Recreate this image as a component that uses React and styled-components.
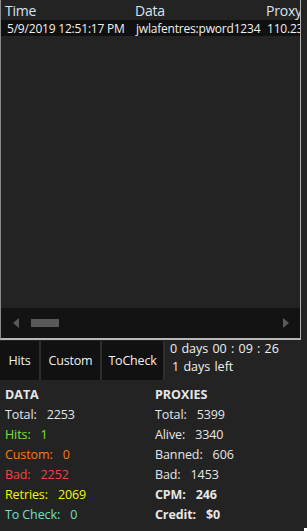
import React from 'react'
import styled, { createGlobalStyle } from 'styled-components';

const Global = createGlobalStyle`
  *, *::before, *::after { box-sizing: border-box; }
  html, body {
    margin: 0;
    padding: 0;
    background: #232323;
  }
  body {
    font-family: "Open Sans", "Noto Sans", sans-serif;
    color: #e6e6e6;
  }
`;

const Page = styled.div`
  width: 307px;
  height: 531px;
  background: #232323;
  display: flex;
  flex-direction: column;
  overflow: hidden;
  position: relative;
`;

// 결과 그리드
const Grid = styled.div`
  width: 301px;
  height: 340px;
  border-left: 1px solid #8a8a8a;
  border-right: 1px solid #b0b0b0;
  border-bottom: 2px solid #b8b8b8;
  display: flex;
  flex-direction: column;
  overflow: hidden;
  background: #232323;
`;

const Row = styled.div`
  display: grid;
  grid-template-columns: 130px 131px 80px;
  height: ${p => p.$h}px;
  flex-shrink: 0;
  align-items: center;
  background: ${p => p.$bg};
  white-space: nowrap;
`;

const HeadCell = styled.div`
  font-size: 14px;
  color: #d8e4f0;
  padding-left: 4px;
  letter-spacing: -0.2px;
`;

const Cell = styled.div`
  font-size: 12px;
  color: #f0f0f0;
  padding-left: ${p => p.$pl || 5}px;
  letter-spacing: -0.2px;
`;

const Body = styled.div`
  flex: 1;
`;

const HScroll = styled.div`
  height: 30px;
  flex-shrink: 0;
  background: #131313;
  display: flex;
  align-items: center;
  padding: 0 11px 0 12px;
  gap: 12px;
`;

const Arrow = styled.div`
  width: 0;
  height: 0;
  border-top: 5px solid transparent;
  border-bottom: 5px solid transparent;
  ${p => p.$dir === 'left'
    ? 'border-right: 6px solid #5a5a5a;'
    : 'border-left: 6px solid #5a5a5a; margin-left: auto;'}
`;

const Thumb = styled.div`
  width: 28px;
  height: 8px;
  background: #5a5a5a;
`;

const Controls = styled.div`
  display: flex;
  height: 39px;
  margin-top: 1px;
  flex-shrink: 0;
`;

const Tab = styled.div`
  width: ${p => p.$w}px;
  height: 100%;
  background: #111;
  border-right: 2px solid #2e2e2e;
  display: flex;
  align-items: center;
  justify-content: center;
  font-size: 12.5px;
  color: #f0f0f0;
  letter-spacing: -0.2px;
`;

const Timer = styled.div`
  display: flex;
  flex-direction: column;
  padding: 0 0 0 5px;
  font-size: 12.5px;
  line-height: 18px;
  color: #f0f0f0;
  word-spacing: 1px;
  margin-top: -1px;
`;

const Stats = styled.div`
  display: grid;
  grid-template-columns: 150px 1fr;
  padding: 5px 0 0 5px;
`;

const Col = styled.div`
  display: flex;
  flex-direction: column;
`;

const Title = styled.div`
  font-size: 12.5px;
  font-weight: 700;
  color: #e6e6e6;
  height: 20px;
  line-height: 20px;
`;

const Stat = styled.div`
  font-size: 12.5px;
  height: 20px;
  line-height: 20px;
  color: ${p => p.$color || '#e6e6e6'};
  font-weight: ${p => p.$bold ? 700 : 400};
  letter-spacing: -0.1px;
  span { margin-left: 10px; }
`;

const Grip = styled.div`
  position: absolute;
  right: 0;
  bottom: 0;
  width: 3px;
  height: 3px;
  background: #fff;
`;

const dataStats = [
  { label: 'Total:', value: 2253 },
  { label: 'Hits:', value: 1, color: '#7fe03a' },
  { label: 'Custom:', value: 0, color: '#ff7a10' },
  { label: 'Bad:', value: 2252, color: '#f0483c' },
  { label: 'Retries:', value: 2069, color: '#f5f514' },
  { label: 'To Check:', value: 0, color: '#6ee0c4' },
];

const proxyStats = [
  { label: 'Total:', value: 5399 },
  { label: 'Alive:', value: 3340 },
  { label: 'Banned:', value: 606 },
  { label: 'Bad:', value: 1453 },
  { label: 'CPM:', value: 246, bold: true },
  { label: 'Credit:', value: '$0', bold: true },
];

export default function App() {
  return (
    <Page>
      <Global />
      <Grid>
        <Row $h={20} $bg="#232323">
          <HeadCell>Time</HeadCell>
          <HeadCell>Data</HeadCell>
          <HeadCell>Proxy</HeadCell>
        </Row>
        <Row $h={16} $bg="#101010">
          <Cell $pl={6}>5/9/2019 12:51:17 PM</Cell>
          <Cell>jwlafentres:pword1234</Cell>
          <Cell>110.234.12.8</Cell>
        </Row>
        <Body />
        <HScroll>
          <Arrow $dir="left" />
          <Thumb />
          <Arrow $dir="right" />
        </HScroll>
      </Grid>
      <Controls>
        <Tab $w={41}>Hits</Tab>
        <Tab $w={61}>Custom</Tab>
        <Tab $w={63}>ToCheck</Tab>
        <Timer>
          <div>0 days 00 : 09 : 26</div>
          <div style={{ paddingLeft: 2 }}>1 days left</div>
        </Timer>
      </Controls>
      <Stats>
        <Col>
          <Title>DATA</Title>
          {dataStats.map(s => (
            <Stat key={s.label} $color={s.color}>{s.label}<span>{s.value}</span></Stat>
          ))}
        </Col>
        <Col>
          <Title>PROXIES</Title>
          {proxyStats.map(s => (
            <Stat key={s.label} $bold={s.bold}>{s.label}<span>{s.value}</span></Stat>
          ))}
        </Col>
      </Stats>
      <Grip />
    </Page>
  );
}
